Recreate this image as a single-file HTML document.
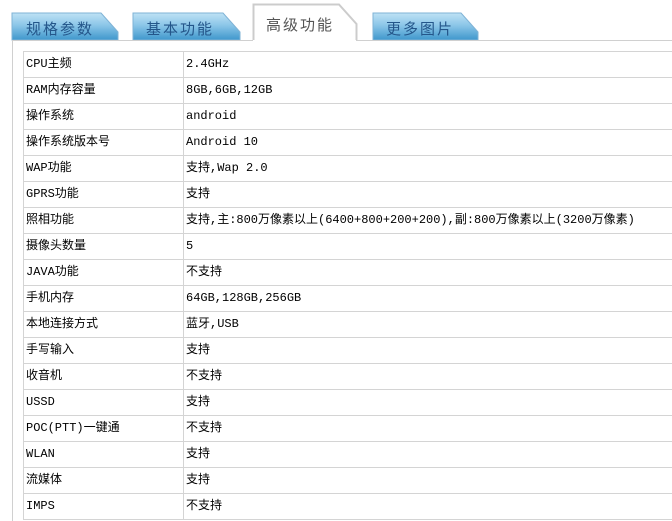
<!DOCTYPE html>
<html><head><meta charset="utf-8"><style>
body{margin:0;width:672px;height:521px;background:#fff;overflow:hidden;position:relative;font-family:"Liberation Mono","WenQuanYi Zen Hei",monospace;font-size:12px;color:#000}
.tt{position:absolute;font-family:"Liberation Sans","Noto Sans CJK SC",sans-serif;font-size:15px;letter-spacing:2px}
table{position:absolute;left:23px;top:51px;border-collapse:collapse;width:660px}
td{border:1px solid #d4d4d4;height:25px;line-height:25px;padding:0 0 0 2px;white-space:nowrap;overflow:hidden}
td div{height:25px;overflow:hidden}
td:first-child{width:157px}
</style></head><body>
<svg width="672" height="60" style="position:absolute;left:0;top:0">
<defs><linearGradient id="g" x1="0" y1="0" x2="0" y2="1"><stop offset="0" stop-color="#bfe2f5"/><stop offset=".45" stop-color="#8cc6e8"/><stop offset="1" stop-color="#3f97cc"/></linearGradient></defs>
<path d="M12 40V13H101L118 32V40Z" fill="url(#g)" stroke="#7fb3d6"/>
<path d="M133 40V13H223L240 32V40Z" fill="url(#g)" stroke="#7fb3d6"/>
<path d="M373 40V13H461L478 32V40Z" fill="url(#g)" stroke="#7fb3d6"/>
<path d="M253.5 40V4.5H339L356.5 24V40" fill="#fff" stroke="#ccc" stroke-width="2"/>
<line x1="12" y1="40.5" x2="253" y2="40.5" stroke="#d0d0d0"/>
<line x1="356" y1="40.5" x2="672" y2="40.5" stroke="#d0d0d0"/>
</svg>
<div style="position:absolute;left:12px;top:40px;width:1px;height:481px;background:#d0d0d0"></div>
<div class="tt" style="left:26px;top:18px;color:#24568a">规格参数</div>
<div class="tt" style="left:146px;top:18px;color:#24568a">基本功能</div>
<div class="tt" style="left:266px;top:14px;color:#555">高级功能</div>
<div class="tt" style="left:386px;top:18px;color:#24568a">更多图片</div>
<table>
<tr><td><div>CPU主频</div></td><td><div>2.4GHz</div></td></tr>
<tr><td><div>RAM内存容量</div></td><td><div>8GB,6GB,12GB</div></td></tr>
<tr><td><div>操作系统</div></td><td><div>android</div></td></tr>
<tr><td><div>操作系统版本号</div></td><td><div>Android 10</div></td></tr>
<tr><td><div>WAP功能</div></td><td><div>支持,Wap 2.0</div></td></tr>
<tr><td><div>GPRS功能</div></td><td><div>支持</div></td></tr>
<tr><td><div>照相功能</div></td><td><div>支持,主:800万像素以上(6400+800+200+200),副:800万像素以上(3200万像素)</div></td></tr>
<tr><td><div>摄像头数量</div></td><td><div>5</div></td></tr>
<tr><td><div>JAVA功能</div></td><td><div>不支持</div></td></tr>
<tr><td><div>手机内存</div></td><td><div>64GB,128GB,256GB</div></td></tr>
<tr><td><div>本地连接方式</div></td><td><div>蓝牙,USB</div></td></tr>
<tr><td><div>手写输入</div></td><td><div>支持</div></td></tr>
<tr><td><div>收音机</div></td><td><div>不支持</div></td></tr>
<tr><td><div>USSD</div></td><td><div>支持</div></td></tr>
<tr><td><div>POC(PTT)一键通</div></td><td><div>不支持</div></td></tr>
<tr><td><div>WLAN</div></td><td><div>支持</div></td></tr>
<tr><td><div>流媒体</div></td><td><div>支持</div></td></tr>
<tr><td><div>IMPS</div></td><td><div>不支持</div></td></tr>
</table>
</body></html>
